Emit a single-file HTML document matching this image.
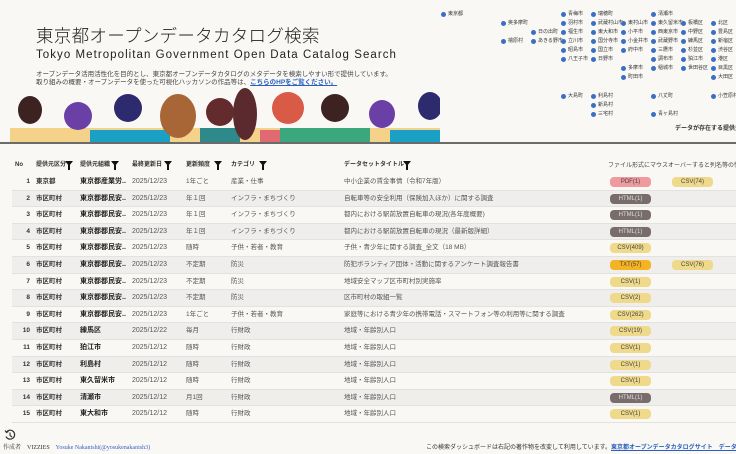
<!DOCTYPE html>
<html><head><meta charset="utf-8"><style>
*{margin:0;padding:0;box-sizing:border-box}
body{width:736px;height:454px;overflow:hidden;background:#f9f8f5;font-family:"Liberation Sans","Noto Sans CJK JP",sans-serif;color:#333;position:relative}
.a{position:absolute;white-space:nowrap}
.t1{left:36px;top:25px;font-size:17.5px;line-height:22px;letter-spacing:0.3px;color:#222;font-family:"Noto Sans CJK JP",sans-serif;font-weight:300}
.t2{left:36px;top:48px;font-size:11.5px;line-height:14px;letter-spacing:1.05px;color:#222;font-family:"Liberation Sans",sans-serif}
.d{left:36px;font-size:6.5px;line-height:8px;color:#444}
.m{font-size:5px;line-height:6px;color:#333;padding-left:7px}
.m:before{content:"";position:absolute;left:0;top:0.5px;width:5px;height:5px;border-radius:50%;background:#3a6fc4}
.hr{left:0;top:142px;width:736px;height:2px;background:#6b6b6b}
.h{font-size:6px;line-height:8px;font-weight:bold;color:#333;top:161px}
.f{display:inline-block;width:0;height:0;border-left:4px solid transparent;border-right:4px solid transparent;border-top:5px solid #111;position:absolute;top:161px}
.f:after{content:"";position:absolute;left:-1px;top:-1px;width:2px;height:5px;background:#111}
.row{position:absolute;left:12px;width:724px;height:16.6px;border-bottom:1px solid #e3e2df;font-size:6.5px;color:#555}
.row.g{background:#efeeec}
.row span{position:absolute;top:0;height:16px;line-height:16px;white-space:nowrap}
.n{left:0;width:18px;text-align:right;font-weight:bold;color:#333}
.k{left:24px;font-weight:bold;color:#333}
.o{left:68px;font-weight:bold;color:#222;font-size:7px}
.dt{left:120px;font-size:7px;color:#555}
.fr{left:174px}
.c{left:219px}
.ti{left:332px}
.row span.b{top:3px;height:10px;width:41px;border-radius:4px;font-size:6px;text-align:center;line-height:10px;color:#444}
.csv{background:#efd98a}.html{background:#786d6a;color:#ddd !important}.pdf{background:#ee9a9e}.txt{background:#f5b324}
</style></head><body>
<div class="a t1">東京都オープンデータカタログ検索</div>
<div class="a t2">Tokyo Metropolitan Government Open Data Catalog Search</div>
<div class="a d" style="top:71px">オープンデータ活用活性化を目的とし、東京都オープンデータカタログのメタデータを検索しやすい形で提供しています。</div>
<div class="a d" style="top:79px">取り組みの概要・オープンデータを使った可視化ハッカソンの作品等は、<span style="color:#2a5fc0;text-decoration:underline;font-weight:bold">こちらのHPをご覧ください。</span></div>

<svg class="a" style="left:0;top:88px" width="440" height="56">
<rect x="10" y="40" width="430" height="14" fill="#f4d28a"/>
<rect x="90" y="42" width="80" height="12" fill="#1aa0c4"/>
<rect x="200" y="40" width="40" height="14" fill="#2e8a8a"/>
<rect x="260" y="42" width="50" height="12" fill="#e06a72"/>
<rect x="280" y="40" width="90" height="14" fill="#3ba77c"/>
<rect x="390" y="42" width="50" height="12" fill="#1aa0c4"/>
<ellipse cx="30" cy="22" rx="12" ry="14" fill="#3c2321"/>
<ellipse cx="78" cy="28" rx="14" ry="14" fill="#6a3fa6"/>
<ellipse cx="128" cy="20" rx="14" ry="14" fill="#2d2a6e"/>
<ellipse cx="178" cy="28" rx="18" ry="22" fill="#a86535"/>
<ellipse cx="220" cy="24" rx="14" ry="14" fill="#642b2e"/>
<ellipse cx="245" cy="26" rx="12" ry="26" fill="#5a2a2e"/>
<ellipse cx="288" cy="20" rx="16" ry="16" fill="#d95a46"/>
<ellipse cx="335" cy="20" rx="14" ry="14" fill="#3c2321"/>
<ellipse cx="382" cy="26" rx="13" ry="14" fill="#6a3fa6"/>
<ellipse cx="430" cy="18" rx="12" ry="14" fill="#2d2a6e"/>
</svg>

<div class="a m" style="left:441px;top:11px">東京都</div>
<div class="a m" style="left:501px;top:20px">奥多摩町</div>
<div class="a m" style="left:531px;top:29px">日の出町</div>
<div class="a m" style="left:501px;top:38px">檜原村</div>
<div class="a m" style="left:531px;top:38px">あきる野市</div>
<div class="a m" style="left:561px;top:11px">青梅市</div>
<div class="a m" style="left:561px;top:20px">羽村市</div>
<div class="a m" style="left:561px;top:29px">福生市</div>
<div class="a m" style="left:561px;top:38px">立川市</div>
<div class="a m" style="left:561px;top:47px">昭島市</div>
<div class="a m" style="left:561px;top:56px">八王子市</div>
<div class="a m" style="left:561px;top:93px">大島町</div>
<div class="a m" style="left:591px;top:11px">瑞穂町</div>
<div class="a m" style="left:591px;top:20px">武蔵村山市</div>
<div class="a m" style="left:591px;top:29px">東大和市</div>
<div class="a m" style="left:591px;top:38px">国分寺市</div>
<div class="a m" style="left:591px;top:47px">国立市</div>
<div class="a m" style="left:591px;top:56px">日野市</div>
<div class="a m" style="left:591px;top:93px">利島村</div>
<div class="a m" style="left:591px;top:102px">新島村</div>
<div class="a m" style="left:591px;top:111px">三宅村</div>
<div class="a m" style="left:621px;top:20px">東村山市</div>
<div class="a m" style="left:621px;top:29px">小平市</div>
<div class="a m" style="left:621px;top:38px">小金井市</div>
<div class="a m" style="left:621px;top:47px">府中市</div>
<div class="a m" style="left:621px;top:65px">多摩市</div>
<div class="a m" style="left:621px;top:74px">町田市</div>
<div class="a m" style="left:651px;top:11px">清瀬市</div>
<div class="a m" style="left:651px;top:20px">東久留米市</div>
<div class="a m" style="left:651px;top:29px">西東京市</div>
<div class="a m" style="left:651px;top:38px">武蔵野市</div>
<div class="a m" style="left:651px;top:47px">三鷹市</div>
<div class="a m" style="left:651px;top:56px">調布市</div>
<div class="a m" style="left:651px;top:65px">稲城市</div>
<div class="a m" style="left:651px;top:93px">八丈町</div>
<div class="a m" style="left:651px;top:111px">青ヶ島村</div>
<div class="a m" style="left:681px;top:20px">板橋区</div>
<div class="a m" style="left:681px;top:29px">中野区</div>
<div class="a m" style="left:681px;top:38px">練馬区</div>
<div class="a m" style="left:681px;top:47px">杉並区</div>
<div class="a m" style="left:681px;top:56px">狛江市</div>
<div class="a m" style="left:681px;top:65px">世田谷区</div>
<div class="a m" style="left:711px;top:20px">北区</div>
<div class="a m" style="left:711px;top:29px">豊島区</div>
<div class="a m" style="left:711px;top:38px">新宿区</div>
<div class="a m" style="left:711px;top:47px">渋谷区</div>
<div class="a m" style="left:711px;top:56px">港区</div>
<div class="a m" style="left:711px;top:65px">目黒区</div>
<div class="a m" style="left:711px;top:74px">大田区</div>
<div class="a m" style="left:711px;top:93px">小笠原村</div>
<div class="a" style="left:675px;top:123px;font-size:6px;font-weight:bold;color:#333">データが存在する提供元</div>
<div class="a hr"></div>

<div class="a h" style="left:15px">No</div>
<div class="a h" style="left:36px">提供元区分</div><i class="f" style="left:65px"></i>
<div class="a h" style="left:80px">提供元組織</div><i class="f" style="left:111px"></i>
<div class="a h" style="left:132px">最終更新日</div><i class="f" style="left:164px"></i>
<div class="a h" style="left:186px">更新頻度</div><i class="f" style="left:214px"></i>
<div class="a h" style="left:231px">カテゴリ</div><i class="f" style="left:259px"></i>
<div class="a h" style="left:344px">データセットタイトル</div><i class="f" style="left:403px"></i>
<div class="a" style="left:608px;top:160px;font-size:6px;color:#444">ファイル形式にマウスオーバーすると列名等の情報が</div>

<div class="row" style="top:174px"><span class="n">1</span><span class="k">東京都</span><span class="o">東京都産業労..</span><span class="dt">2025/12/23</span><span class="fr">1年ごと</span><span class="c">産業・仕事</span><span class="ti">中小企業の賃金事情（令和7年版）</span><span class="b pdf" style="left:598px">PDF(1)</span><span class="b csv" style="left:660px">CSV(74)</span></div>
<div class="row g" style="top:190.6px"><span class="n">2</span><span class="k">市区町村</span><span class="o">東京都都民安..</span><span class="dt">2025/12/23</span><span class="fr">年１回</span><span class="c">インフラ・まちづくり</span><span class="ti">自転車等の安全利用（保険加入ほか）に関する調査</span><span class="b html" style="left:598px">HTML(1)</span></div>
<div class="row" style="top:207.2px"><span class="n">3</span><span class="k">市区町村</span><span class="o">東京都都民安..</span><span class="dt">2025/12/23</span><span class="fr">年１回</span><span class="c">インフラ・まちづくり</span><span class="ti">都内における駅前放置自転車の現況(各年度概要)</span><span class="b html" style="left:598px">HTML(1)</span></div>
<div class="row g" style="top:223.8px"><span class="n">4</span><span class="k">市区町村</span><span class="o">東京都都民安..</span><span class="dt">2025/12/23</span><span class="fr">年１回</span><span class="c">インフラ・まちづくり</span><span class="ti">都内における駅前放置自転車の現況（最新版詳細）</span><span class="b html" style="left:598px">HTML(1)</span></div>
<div class="row" style="top:240.4px"><span class="n">5</span><span class="k">市区町村</span><span class="o">東京都都民安..</span><span class="dt">2025/12/23</span><span class="fr">随時</span><span class="c">子供・若者・教育</span><span class="ti">子供・青少年に関する調査_全文（18 MB）</span><span class="b csv" style="left:598px">CSV(409)</span></div>
<div class="row g" style="top:257px"><span class="n">6</span><span class="k">市区町村</span><span class="o">東京都都民安..</span><span class="dt">2025/12/23</span><span class="fr">不定期</span><span class="c">防災</span><span class="ti">防犯ボランティア団体・活動に関するアンケート調査報告書</span><span class="b txt" style="left:598px">TXT(57)</span><span class="b csv" style="left:660px">CSV(76)</span></div>
<div class="row" style="top:273.6px"><span class="n">7</span><span class="k">市区町村</span><span class="o">東京都都民安..</span><span class="dt">2025/12/23</span><span class="fr">不定期</span><span class="c">防災</span><span class="ti">地域安全マップ区市町村別実施率</span><span class="b csv" style="left:598px">CSV(1)</span></div>
<div class="row g" style="top:290.2px"><span class="n">8</span><span class="k">市区町村</span><span class="o">東京都都民安..</span><span class="dt">2025/12/23</span><span class="fr">不定期</span><span class="c">防災</span><span class="ti">区市町村の取組一覧</span><span class="b csv" style="left:598px">CSV(2)</span></div>
<div class="row" style="top:306.8px"><span class="n">9</span><span class="k">市区町村</span><span class="o">東京都都民安..</span><span class="dt">2025/12/23</span><span class="fr">1年ごと</span><span class="c">子供・若者・教育</span><span class="ti">家庭等における青少年の携帯電話・スマートフォン等の利用等に関する調査</span><span class="b csv" style="left:598px">CSV(262)</span></div>
<div class="row g" style="top:323.4px"><span class="n">10</span><span class="k">市区町村</span><span class="o">練馬区</span><span class="dt">2025/12/22</span><span class="fr">毎月</span><span class="c">行財政</span><span class="ti">地域・年齢別人口</span><span class="b csv" style="left:598px">CSV(19)</span></div>
<div class="row" style="top:340px"><span class="n">11</span><span class="k">市区町村</span><span class="o">狛江市</span><span class="dt">2025/12/12</span><span class="fr">随時</span><span class="c">行財政</span><span class="ti">地域・年齢別人口</span><span class="b csv" style="left:598px">CSV(1)</span></div>
<div class="row g" style="top:356.6px"><span class="n">12</span><span class="k">市区町村</span><span class="o">利島村</span><span class="dt">2025/12/12</span><span class="fr">随時</span><span class="c">行財政</span><span class="ti">地域・年齢別人口</span><span class="b csv" style="left:598px">CSV(1)</span></div>
<div class="row" style="top:373.2px"><span class="n">13</span><span class="k">市区町村</span><span class="o">東久留米市</span><span class="dt">2025/12/12</span><span class="fr">随時</span><span class="c">行財政</span><span class="ti">地域・年齢別人口</span><span class="b csv" style="left:598px">CSV(1)</span></div>
<div class="row g" style="top:389.8px"><span class="n">14</span><span class="k">市区町村</span><span class="o">清瀬市</span><span class="dt">2025/12/12</span><span class="fr">月1回</span><span class="c">行財政</span><span class="ti">地域・年齢別人口</span><span class="b html" style="left:598px">HTML(1)</span></div>
<div class="row" style="top:406.4px"><span class="n">15</span><span class="k">市区町村</span><span class="o">東大和市</span><span class="dt">2025/12/12</span><span class="fr">随時</span><span class="c">行財政</span><span class="ti">地域・年齢別人口</span><span class="b csv" style="left:598px">CSV(1)</span></div>

<svg class="a" style="left:4px;top:429px" width="12" height="12" viewBox="0 0 12 12"><path d="M2.5 3A4.5 4.5 0 1 1 2 7.5" fill="none" stroke="#333" stroke-width="1.2"/><path d="M1 1.5L2.5 3.5L4.5 2.5" fill="none" stroke="#333" stroke-width="1.1"/><path d="M6 3.5V6.5L8 8" fill="none" stroke="#333" stroke-width="1.1"/></svg>
<div class="a" style="left:3px;top:442px;font-size:6px;color:#333;font-family:'Liberation Serif','Noto Serif CJK SC',serif">作成者　VIZZIES　<span style="color:#3a5fc0">Yosuke Nakanishi(@yosukenakanish3)</span></div>
<div class="a" style="left:426px;top:442px;font-size:6px;color:#333">この検索ダッシュボードは右記の著作物を改変して利用しています。<span style="color:#2a5fc0;text-decoration:underline;font-weight:bold">東京都オープンデータカタログサイト　データ</span></div>
</body></html>
